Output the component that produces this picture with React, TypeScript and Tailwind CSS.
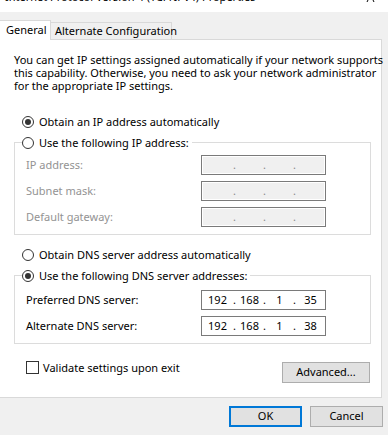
import clsx from 'clsx';

const SEG_WIDTHS = ['w-[31px]', 'w-[27px]', 'w-[27px]', 'w-[29px]'];

const Radio = ({ checked }: { checked?: boolean }) => (
  <span className="flex h-[12px] w-[12px] shrink-0 items-center justify-center rounded-full border border-[#333] bg-white">
    {checked && <span className="h-[6px] w-[6px] rounded-full bg-[#333]" />}
  </span>
);

const RadioRow = ({ label, checked }: { label: string; checked?: boolean }) => (
  <div className="flex h-[15px] items-center gap-[5px] whitespace-nowrap leading-[15px]">
    <Radio checked={checked} />
    <span>{label}</span>
  </div>
);

const IpField = ({ values, disabled }: { values?: string[]; disabled?: boolean }) => (
  <div
    className={clsx(
      'flex h-[20px] w-[125px] shrink-0 items-center border border-[#7a7a7a] leading-[18px]',
      disabled ? 'bg-[#f0f0f0] text-[#8a8a8a] shadow-[inset_0_0_0_1px_#fff]' : 'bg-white'
    )}
  >
    {SEG_WIDTHS.map((w, i) => (
      <div key={i} className="flex items-center">
        {i > 0 && <span className="w-[3px] text-center">.</span>}
        <span className={clsx(w, 'text-center')}>{values ? values[i] : ''}</span>
      </div>
    ))}
  </div>
);

const FieldRow = ({ label, disabled, values }: { label: string; disabled?: boolean; values?: string[] }) => (
  <div className="flex h-[20px] items-center">
    <span className={clsx('w-[175px]', disabled && 'text-[#939393]')}>{label}</span>
    <IpField disabled={disabled} values={values} />
  </div>
);

const Group = ({ legend, children, gap }: { legend: React.ReactNode; children: React.ReactNode; gap: string }) => (
  <fieldset className="w-[357px] border border-[#dcdcdc] p-0">
    <legend className="ml-[7px] p-0 pr-[3px]">{legend}</legend>
    <div className={clsx('flex flex-col gap-[6px] pl-[11px] pb-[7px]', gap)}>{children}</div>
  </fieldset>
);

const Button = ({ label, primary, className }: { label: string; primary?: boolean; className?: string }) => (
  <div
    className={clsx(
      'flex h-[21px] items-center justify-center bg-[#e1e1e1]',
      primary ? 'border-2 border-[#0078d7]' : 'border border-[#adadad]',
      className
    )}
  >
    {label}
  </div>
);

export default function App() {
  return (
    <div className="flex h-[435px] w-[388px] flex-col overflow-hidden bg-[#f0f0f0] font-['Noto_Sans',sans-serif] text-[11px] text-black">
      {/* title bar, mostly scrolled off */}
      <div className="flex h-[12px] shrink-0 justify-between overflow-hidden bg-white">
        <span className="mt-[-11px] whitespace-nowrap pl-[5px] leading-[16px]">
          Internet Protocol Version 4 (TCP/IPv4) Properties
        </span>
        <svg width="16" height="12" className="mr-[6px]" viewBox="0 0 16 12">
          <path d="M2 0 L1 2 M7 0 L8 2" stroke="#000" strokeWidth="1" />
        </svg>
      </div>

      {/* tabs */}
      <div className="flex h-[27px] shrink-0 items-end whitespace-nowrap">
        <div className="relative z-10 mb-[-1px] flex h-[20px] w-[51px] items-center border-t border-r border-[#d9d9d9] bg-white pl-[6px] pb-[1px]">
          General
        </div>
        <div className="flex h-[17px] w-[121px] items-center border-t border-r border-[#d9d9d9] pl-[4px]">
          Alternate Configuration
        </div>
      </div>

      {/* panel */}
      <div className="ml-[-1px] flex h-[359px] w-[383px] shrink-0 flex-col border border-[#d9d9d9] bg-white pl-[14px]">
        <p className="mt-[13px] whitespace-nowrap leading-[13px]">
          You can get IP settings assigned automatically if your network supports
          <br />
          this capability. Otherwise, you need to ask your network administrator
          <br />
          for the appropriate IP settings.
        </p>

        <div className="mt-[22px] ml-[8px]">
          <RadioRow label="Obtain an IP address automatically" checked />
        </div>

        <div className="mt-[6px]">
          <Group legend={<RadioRow label="Use the following IP address:" />} gap="pt-[5px]">
            <FieldRow label="IP address:" disabled />
            <FieldRow label="Subnet mask:" disabled />
            <FieldRow label="Default gateway:" disabled />
          </Group>
        </div>

        <div className="mt-[12px] ml-[8px]">
          <RadioRow label="Obtain DNS server address automatically" />
        </div>

        <div className="mt-[6px]">
          <Group legend={<RadioRow label="Use the following DNS server addresses:" checked />} gap="pt-[7px]">
            <FieldRow label="Preferred DNS server:" values={['192', '168', '1', '35']} />
            <FieldRow label="Alternate DNS server:" values={['192', '168', '1', '38']} />
          </Group>
        </div>

        <div className="mt-[17px] flex w-[357px] items-start justify-between">
          <div className="flex h-[13px] items-center gap-[4px] pl-[12px] leading-[13px]">
            <span className="h-[13px] w-[13px] shrink-0 border border-[#333] bg-white" />
            <span>Validate settings upon exit</span>
          </div>
          <Button label="Advanced..." className="mt-[1px] mr-[1px] w-[88px]" />
        </div>
      </div>

      {/* dialog buttons */}
      <div className="mt-[8px] flex justify-end gap-[8px] pr-[5px]">
        <Button label="OK" primary className="w-[73px]" />
        <Button label="Cancel" className="w-[73px]" />
      </div>
    </div>
  );
}
